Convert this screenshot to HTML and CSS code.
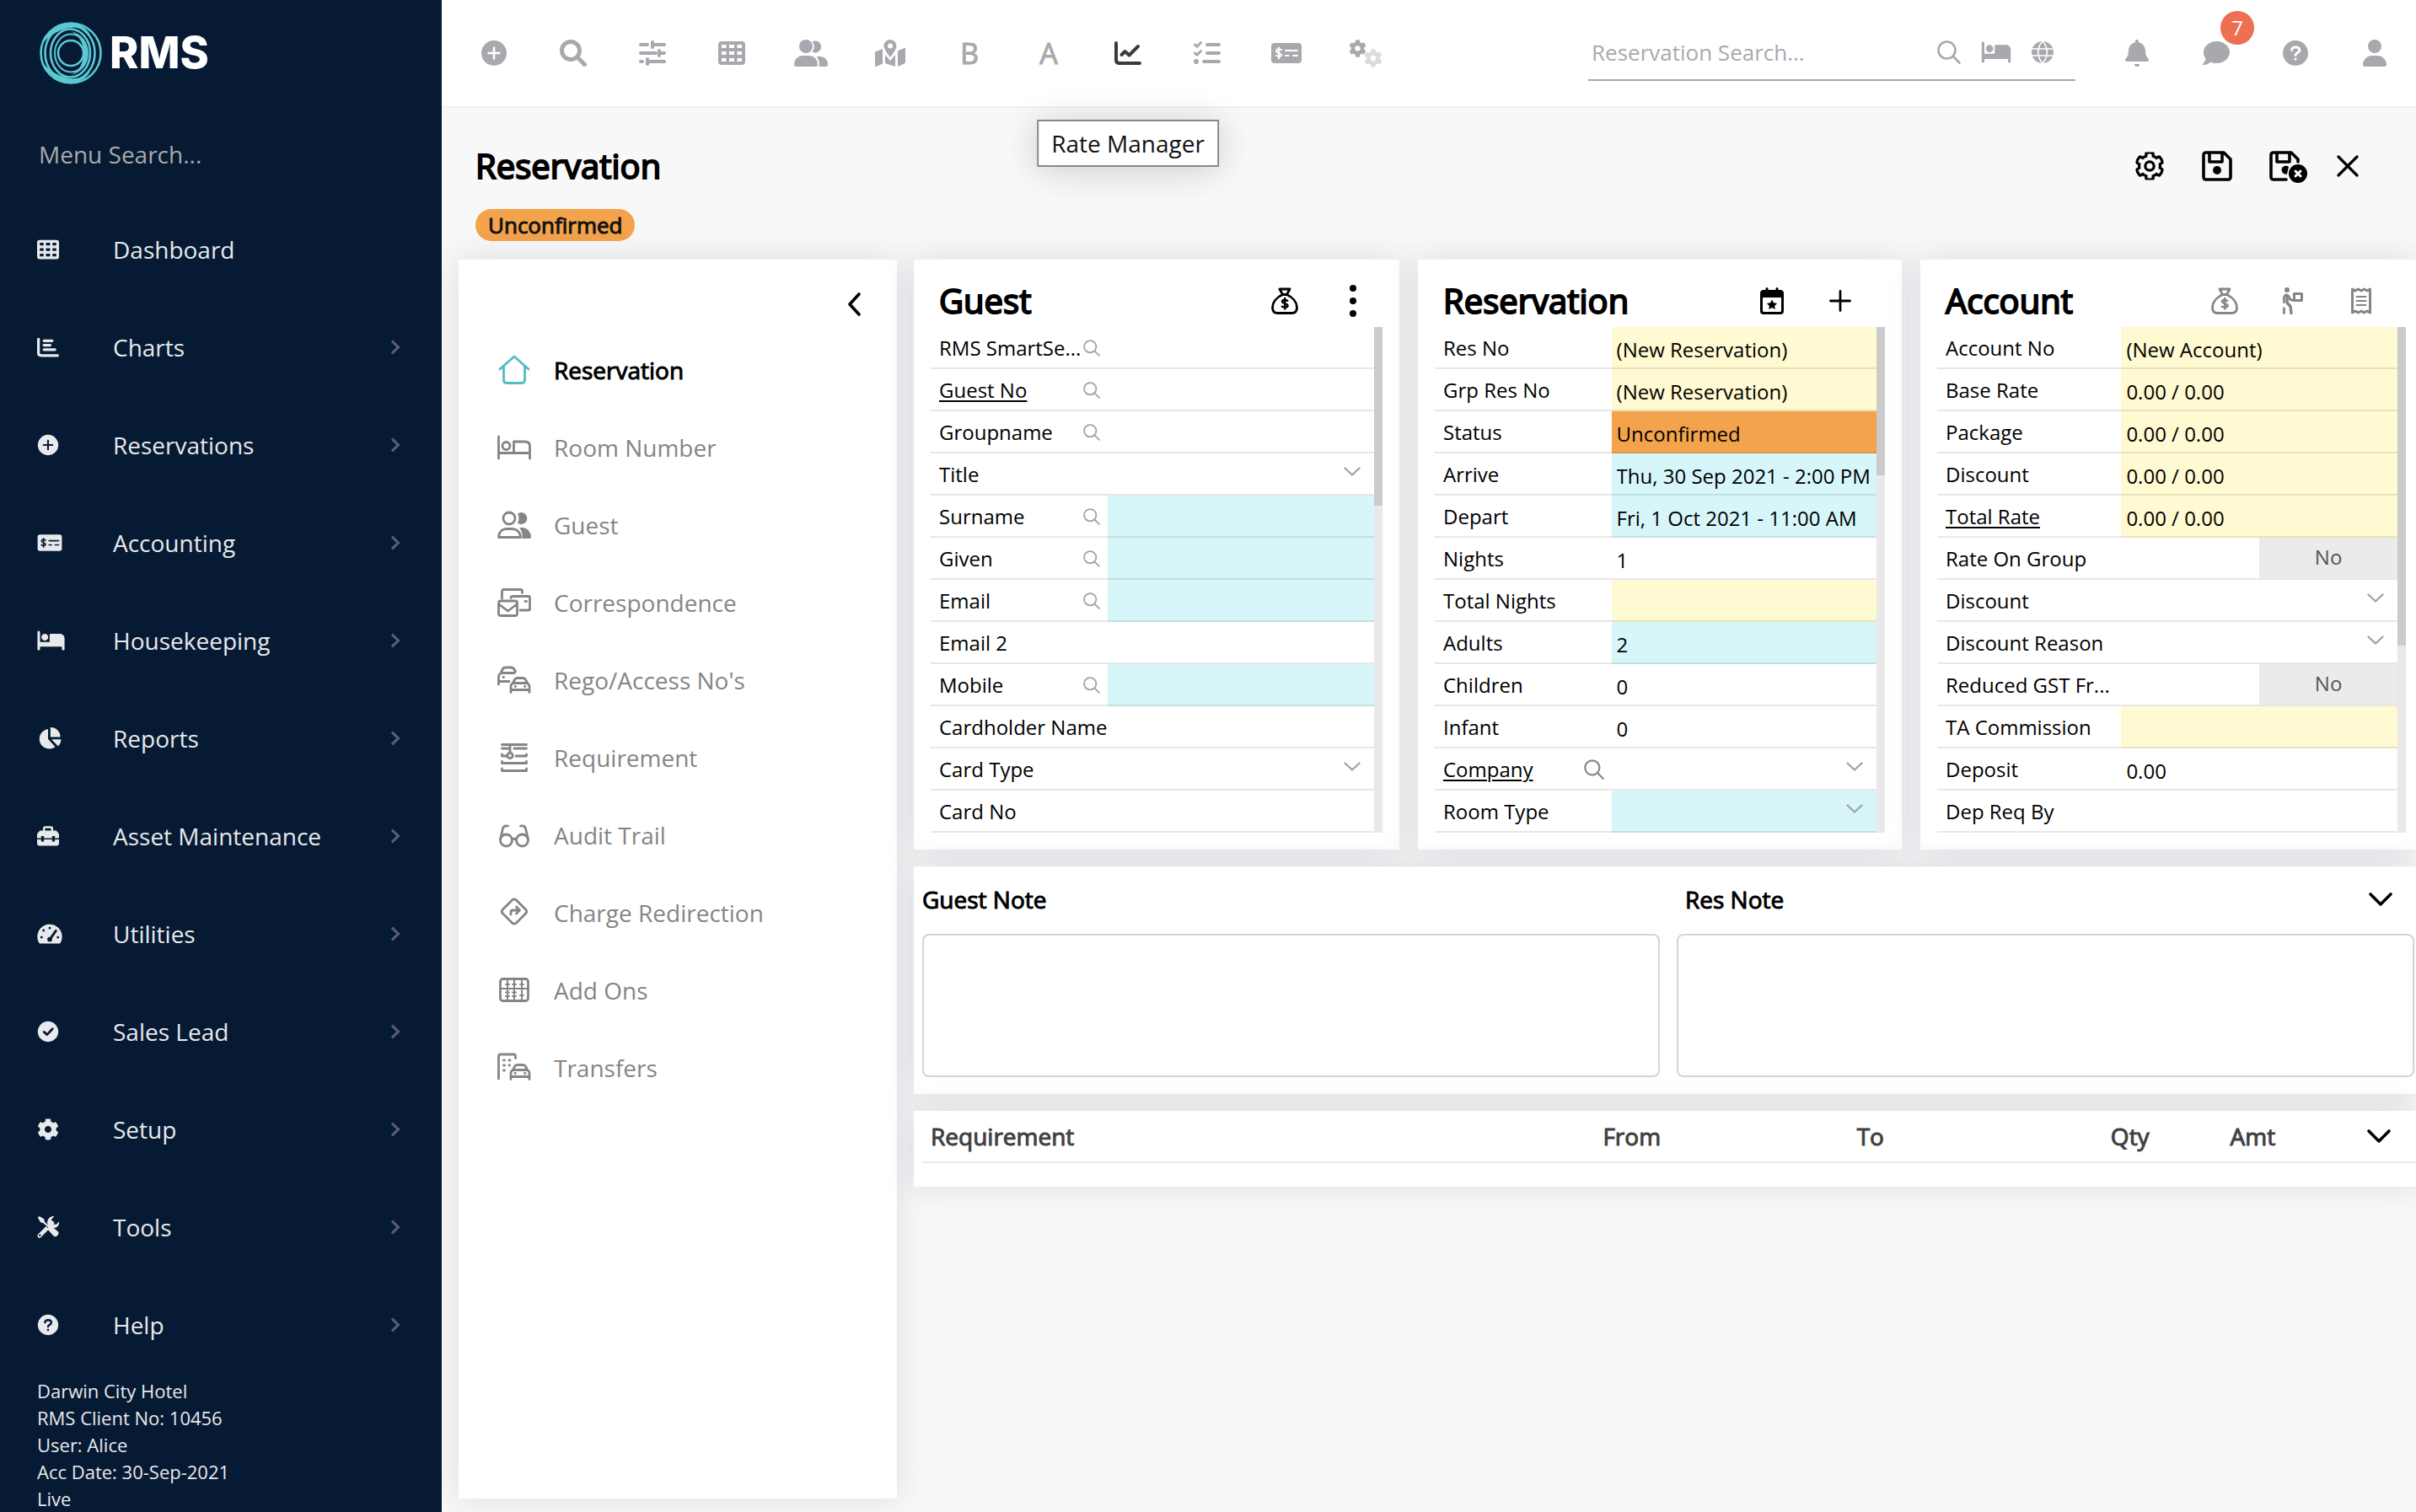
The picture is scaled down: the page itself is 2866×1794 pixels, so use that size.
FILE: index.html
```html
<!DOCTYPE html>
<html lang="en">
<head>
<meta charset="utf-8">
<title>RMS - Reservation</title>
<link rel="stylesheet" href="styles.css">
</head>
<body>
<svg class="sprite" aria-hidden="true">
  <symbol id="plus-circle" viewBox="0 0 32 32"><circle cx="16" cy="16" r="15"/><path class="cut" stroke-width="2.6" d="M16 9.5v13M9.5 16h13"/></symbol>
  <symbol id="magnifier" viewBox="0 0 32 32"><circle class="line" cx="13" cy="13" r="10.5" stroke-width="5"/><path class="line" stroke-width="5" d="M21 21l8.5 8.5"/></symbol>
  <symbol id="sliders" viewBox="0 0 32 32"><path class="line" stroke-width="4" d="M2 6h8M18 6h12M2 16h18M26 16h4M2 26h2M12 26h18M16 3v6M24 13v6M10 23v6"/></symbol>
  <symbol id="grid" viewBox="0 0 32 32"><path fill-rule="evenodd" d="M4 2h24a4 4 0 0 1 4 4v20a4 4 0 0 1-4 4H4a4 4 0 0 1-4-4V6a4 4 0 0 1 4-4zM4 6v4h5.500V6zM13 6v4h6V6zM22.500 6v4H28V6zM4 14v4h5.500v-4zM13 14v4h6v-4zM22.500 14v4H28v-4zM4 22v4h5.500v-4zM13 22v4h6v-4zM22.500 22v4H28v-4z"/></symbol>
  <symbol id="users" viewBox="0 0 40 32"><circle cx="14" cy="8" r="8"/><path d="M10 19h8a10 10 0 0 1 10 10c0 2-.7 3-2 3H2c-1.300 0-2-1-2-3a10 10 0 0 1 10-10z"/><path d="M21.500 14.500a7 7 0 1 0 0-12c3 4 3 8 0 12zM26.500 20H31a9 9 0 0 1 9 9c0 2-.7 3-2 3h-8.500c1-4-.2-9-3-12z"/></symbol>
  <symbol id="map" viewBox="0 0 36 32"><path d="M0 14.500L9 11v17.500L1.500 32C.6 32 0 31.500 0 31zM36 9.500L27 13.500V32l7.500-3.500c1-.5 1.500-1 1.500-2zM12 18l6 7 6-7v14l-12-4z"/><path fill-rule="evenodd" d="M18 0a7.500 7.500 0 0 1 7.500 7.500C25.500 12 18 21 18 21S10.500 12 10.500 7.500A7.500 7.500 0 0 1 18 0zm0 4.500a3 3 0 1 0 0 6 3 3 0 1 0 0-6z"/></symbol>
  <symbol id="chart-line" viewBox="0 0 32 32"><path class="line" stroke-width="4" d="M2 4v20q0 4 4 4h24M8.500 18l4-4 5 4.500L28 8"/></symbol>
  <symbol id="checklist" viewBox="0 0 32 32"><path class="line" stroke-width="4" d="M16 6h14M16 16h14M12 26h18"/><path class="line" stroke-width="3" d="M1.500 6l2.500 2.200L8.500 3.500M1.500 16l2.500 2.200 4.500-4.700"/><circle cx="3" cy="26" r="3"/></symbol>
  <symbol id="money-check" viewBox="0 0 36 32"><rect y="4" width="36" height="24" rx="4"/><path class="cut" stroke-width="2" d="M17 13h14M17 19h3.500M26 19h5M12 12.200c-3-1.500-6-.8-6 1.200 0 3 6 2 6 4.800 0 2-3.500 2.300-6 .8M9 9.500v13"/></symbol>
  <symbol id="gear" viewBox="0 0 512 512"><path d="M487.400 315.700l-42.600-24.600c4.300-23.200 4.300-47 0-70.200l42.600-24.600c4.900-2.800 7.100-8.600 5.500-14-11.100-35.600-30-67.800-54.700-94.600-3.800-4.100-10-5.100-14.800-2.300L380.800 110c-17.900-15.400-38.500-27.300-60.800-35.100V25.800c0-5.600-3.900-10.500-9.400-11.700-36.700-8.200-74.300-7.800-109.200 0-5.500 1.200-9.400 6.100-9.400 11.700V75c-22.200 7.900-42.800 19.800-60.800 35.100L88.700 85.500c-4.900-2.800-11-1.900-14.800 2.300-24.700 26.700-43.600 58.900-54.700 94.600-1.700 5.400.6 11.200 5.500 14L67.300 221c-4.300 23.200-4.300 47 0 70.200l-42.600 24.600c-4.900 2.800-7.100 8.600-5.500 14 11.100 35.600 30 67.800 54.700 94.600 3.800 4.100 10 5.100 14.800 2.300l42.600-24.600c17.900 15.400 38.500 27.300 60.800 35.100v49.200c0 5.600 3.900 10.500 9.400 11.700 36.700 8.200 74.300 7.800 109.200 0 5.500-1.200 9.400-6.100 9.400-11.700v-49.200c22.200-7.900 42.800-19.800 60.800-35.100l42.600 24.600c4.900 2.800 11 1.900 14.800-2.300 24.700-26.700 43.600-58.900 54.700-94.600 1.500-5.500-.7-11.300-5.600-14.100zM256 336c-44.100 0-80-35.900-80-80s35.900-80 80-80 80 35.900 80 80-35.900 80-80 80z"/></symbol>
  <symbol id="bed" viewBox="0 0 640 512"><path d="M176 256c44.110 0 80-35.890 80-80s-35.890-80-80-80-80 35.890-80 80 35.890 80 80 80zm352-160H304c-8.840 0-16 7.160-16 16v176H64V48c0-8.840-7.160-16-16-16H16C7.160 32 0 39.160 0 48v416c0 8.840 7.160 16 16 16h32c8.840 0 16-7.160 16-16v-64h512v64c0 8.840 7.160 16 16 16h32c8.840 0 16-7.160 16-16V208c0-61.860-50.140-112-112-112z"/></symbol>
  <symbol id="question" viewBox="0 0 32 32"><circle cx="16" cy="16" r="15"/><path class="cut" stroke-width="3" d="M11.500 12.500c.3-2.500 2-3.500 4.500-3.500 3 0 4.800 1.500 4.800 3.800 0 3-4.800 3-4.800 5.700M16 23v.3"/></symbol>
  <symbol id="search-thin" viewBox="0 0 28 28"><circle class="line" cx="11.500" cy="11.500" r="10" stroke-width="2.600"/><path class="line" stroke-width="2.600" d="M19 19l7.500 7.500"/></symbol>
  <symbol id="car" viewBox="0 0 26 20"><path class="line" stroke-width="2.800" d="M2 18.500V11q0-2 2-3l2.500-4.500Q7.500 1.500 10 1.500h6q2.500 0 3.500 2L22 8q2 1 2 3v7.500M2 15.500h22M5 7.500h16M7 11.500h.5M18.500 11.500h.5"/></symbol>
  <symbol id="moneybag" viewBox="0 0 32 32"><path class="line" stroke-width="2.800" d="M10 2h12l-3.500 6.500h-5zM13.500 8.500C6 12 1.500 18 1.500 24q0 6.500 6 6.500h17q6 0 6-6.500c0-6-4.500-12-12-15.500z"/><path class="line" stroke-width="2.400" d="M19.300 15.800c-2.800-1.300-6.300-1-6.300 1 0 2.800 6.600 2 6.600 4.900 0 2.200-4 2.400-6.800 1M16.200 13v12.500"/></symbol>
</svg>

<div class="app">
  <aside class="sidebar">
    <a class="brand" href="#">
      <svg class="brand-mark" viewBox="0 0 76 76"><g fill="none" stroke="#5bc8d3" stroke-width="2.600"><circle cx="38" cy="38" r="35.500"/><ellipse cx="37" cy="38" rx="29.500" ry="33"/><ellipse cx="37.500" cy="38" rx="23.500" ry="28.500"/><ellipse cx="38" cy="38" rx="19" ry="22.500" stroke-width="2"/><circle cx="38" cy="38" r="15"/></g><path fill="#5bc8d3" d="M5 26C11 8 28 0 42 3c8 1 15 6 19 13C51 7 39 6 29 10 18 14 11 19 5 26zM5 50c6 18 23 26 37 23 8-1 15-6 19-13-10 9-22 10-32 6-11-4-18-9-24-16zM38 12c13 3 21 13 21 26s-8 23-21 26c10-5 15-14 15-26S48 17 38 12z"/></svg>
      <span class="brand-name">RMS</span>
    </a>
    <input class="menu-search" type="search" placeholder="Menu Search..." aria-label="Menu search">
    <nav>
      <a class="nav-item" href="#"><svg class="ni" viewBox="0 0 32 32"><use href="#grid"/></svg><span>Dashboard</span></a>
      <a class="nav-item" href="#"><svg class="ni" viewBox="0 0 32 32"><path class="line" stroke-width="4" d="M2 4v20q0 4 4 4h24M10 6.500h12M10 13h9M10 19.500h16"/></svg><span>Charts</span><i class="arrow"></i></a>
      <a class="nav-item" href="#"><svg class="ni" viewBox="0 0 32 32"><use href="#plus-circle"/></svg><span>Reservations</span><i class="arrow"></i></a>
      <a class="nav-item" href="#"><svg class="ni ni-card" viewBox="0 0 36 32"><use href="#money-check"/></svg><span>Accounting</span><i class="arrow"></i></a>
      <a class="nav-item" href="#"><svg class="ni ni-wide" viewBox="0 0 640 512"><use href="#bed"/></svg><span>Housekeeping</span><i class="arrow"></i></a>
      <a class="nav-item" href="#"><svg class="ni" viewBox="0 0 32 32"><path d="M19.500 0A14 14 0 0 1 34 14H19.500zM21 17.500h14a14 14 0 0 1-4.500 10zM16 2.500V17l10.500 11.500A14.500 14.500 0 1 1 16 2.500z"/></svg><span>Reports</span><i class="arrow"></i></a>
      <a class="nav-item" href="#"><svg class="ni" viewBox="0 0 32 32"><path class="line" stroke-width="3" d="M10 9V5q0-2 2-2h8q2 0 2 2v4"/><path d="M4 8h24l4 5v6h-6v-3h-4v3H10v-3H6v3H0v-6zM0 21h6v3h4v-3h12v3h4v-3h6v6q0 3-3 3H3q-3 0-3-3z"/></svg><span>Asset Maintenance</span><i class="arrow"></i></a>
      <a class="nav-item" href="#"><svg class="ni ni-card" viewBox="0 0 36 32"><path d="M18 2a18 18 0 0 1 18 18c0 3-.7 6-2 8.500-.5 1-1.300 1.500-2.500 1.500h-27C3.300 30 2.500 29.500 2 28.500A18 18 0 0 1 18 2z"/><path class="cut" stroke-width="3.500" d="M18 7.500v.1M9 11v.1M6 21v.1M30 21v.1M18.500 23.500L27 11.500"/><circle class="dot" cx="18" cy="24" r="3.500"/></svg><span>Utilities</span><i class="arrow"></i></a>
      <a class="nav-item" href="#"><svg class="ni" viewBox="0 0 32 32"><circle cx="16" cy="16" r="15"/><path class="cut" stroke-width="3.400" d="M10 16.500l4.500 4 8-8.500"/></svg><span>Sales Lead</span><i class="arrow"></i></a>
      <a class="nav-item" href="#"><svg class="ni" viewBox="0 0 512 512"><use href="#gear"/></svg><span>Setup</span><i class="arrow"></i></a>
      <a class="nav-item" href="#"><svg class="ni" viewBox="0 0 32 32"><path class="line" stroke-width="6" d="M3.500 28.500L22 10"/><path d="M25 0l-4 5v5l2 2h5l4-4c1 6-4 10-9 9l-4-1-4-5c-1-6 4-12 10-11z"/><path class="cut" stroke-width="2" d="M3 3l22 22"/><path d="M1 2l2-2 7 4 1 4 6 6 4 0 10 9c2 3-3 9-7 6l-8-9v-4L9 10 5 9z"/><circle class="dot" cx="4" cy="28" r="1.500"/></svg><span>Tools</span><i class="arrow"></i></a>
      <a class="nav-item" href="#"><svg class="ni" viewBox="0 0 32 32"><use href="#question"/></svg><span>Help</span><i class="arrow"></i></a>
    </nav>
    <footer class="property">
      <div>Darwin City Hotel</div>
      <div>RMS Client No: 10456</div>
      <div>User: Alice</div>
      <div>Acc Date: 30-Sep-2021</div>
      <div>Live</div>
    </footer>
  </aside>

  <div class="workspace">
    <header class="topbar">
      <div class="tools">
        <button type="button" class="tool" aria-label="Add"><svg class="t32" viewBox="0 0 32 32"><use href="#plus-circle"/></svg></button>
        <button type="button" class="tool" aria-label="Search"><svg class="t32" viewBox="0 0 32 32"><use href="#magnifier"/></svg></button>
        <button type="button" class="tool" aria-label="Filters"><svg class="t32" viewBox="0 0 32 32"><use href="#sliders"/></svg></button>
        <button type="button" class="tool" aria-label="Grid"><svg class="t32" viewBox="0 0 32 32"><use href="#grid"/></svg></button>
        <button type="button" class="tool" aria-label="Guests"><svg class="t40" viewBox="0 0 40 32"><use href="#users"/></svg></button>
        <button type="button" class="tool" aria-label="Map"><svg class="t36" viewBox="0 0 36 32"><use href="#map"/></svg></button>
        <button type="button" class="tool">B</button>
        <button type="button" class="tool">A</button>
        <button type="button" class="tool tool-active" aria-label="Rate Manager" aria-describedby="tip"><svg class="t32" viewBox="0 0 32 32"><use href="#chart-line"/></svg><span class="tooltip" id="tip" role="tooltip">Rate Manager</span></button>
        <button type="button" class="tool" aria-label="Tasks"><svg class="t32" viewBox="0 0 32 32"><use href="#checklist"/></svg></button>
        <button type="button" class="tool" aria-label="Accounts"><svg class="t36" viewBox="0 0 36 32"><use href="#money-check"/></svg></button>
        <button type="button" class="tool" aria-label="Settings"><svg class="t40" viewBox="0 0 40 32"><use href="#gear" x="0" y="0" width="21" height="21"/><g opacity=".4"><use href="#gear" x="18" y="11" width="22" height="22"/></g></svg></button>
      </div>
      <div class="res-search">
        <input type="search" placeholder="Reservation Search..." aria-label="Reservation search">
        <button type="button" aria-label="Search"><svg class="s28" viewBox="0 0 28 28"><use href="#search-thin"/></svg></button>
        <button type="button" aria-label="Rooms"><svg class="s36" viewBox="0 0 640 512"><use href="#bed"/></svg></button>
        <button type="button" aria-label="Online"><svg class="s26" viewBox="0 0 26 26"><circle cx="13" cy="13" r="13"/><path class="cut" stroke-width="1.600" d="M0 9h26M0 17h26M13 0C6 7 6 19 13 26M13 0c7 7 7 19 0 26"/></svg></button>
      </div>
      <div class="user-tools">
        <button type="button" class="tool" aria-label="Alerts"><svg class="t28" viewBox="0 0 448 512"><path d="M224 512c35.320 0 50-20 50-50H174c0 30 15 50 50 50zm215.390-149.710c-19.320-20.760-55.470-51.990-55.470-154.290 0-77.700-54.480-139.900-127.940-155.160V32c0-17.670-14.320-32-31.980-32s-31.980 14.330-31.980 32v20.840C118.560 68.100 64.080 130.300 64.080 208c0 102.300-36.150 133.530-55.470 154.290-6 6.450-8.660 14.160-8.610 21.710.11 16.400 12.980 32 32.100 32h383.800c19.120 0 32-15.600 32.100-32 .05-7.550-2.610-15.270-8.610-21.710z"/></svg></button>
        <button type="button" class="tool" aria-label="Messages"><svg class="t32" viewBox="0 0 32 32"><path d="M16.500 2C25 2 32 8 32 15s-7 13-15.500 13c-2.500 0-5-.5-7-1.500C7 29 4 30 .8 30c-.8 0-1-.8-.5-1.300C1.800 27 3.300 25 3.600 22.800 1.800 20.600 1 18 1 15 1 8 8 2 16.500 2z"/></svg><span class="count">7</span></button>
        <button type="button" class="tool" aria-label="Help"><svg class="t32" viewBox="0 0 32 32"><use href="#question"/></svg></button>
        <button type="button" class="tool" aria-label="Profile"><svg class="t28" viewBox="0 0 28 32"><circle cx="14" cy="8" r="8"/><path d="M11 19h6a11 11 0 0 1 11 11q0 2-2 2H2q-2 0-2-2a11 11 0 0 1 11-11z"/></svg></button>
      </div>
    </header>

    <main class="page">
      <div class="page-head">
        <h1>Reservation</h1>
        <div class="actions">
          <button type="button" aria-label="Settings"><svg class="a36" viewBox="-22 -22 556 556"><g fill="none" stroke="currentColor" stroke-width="50"><use href="#gear" width="512" height="512"/></g></svg></button>
          <button type="button" aria-label="Save"><svg class="a36" viewBox="0 0 36 36"><path class="line" stroke-width="3.600" d="M5 2h21l8 8v21q0 3-3 3H5q-3 0-3-3V5q0-3 3-3zM9 3v10h15V3"/><circle cx="18" cy="23" r="5"/></svg></button>
          <button type="button" aria-label="Save and close"><svg class="a36" viewBox="0 0 36 36"><path class="line" stroke-width="3.600" d="M20 34H5q-3 0-3-3V5q0-3 3-3h21l8 8v3M9 3v10h15V3"/><path d="M23 19a5 5 0 1 0-2 8.500z"/><circle cx="34" cy="27" r="11"/><path class="cut" stroke-width="3" d="M31 24l6 6M37 24l-6 6"/></svg></button>
          <button type="button" aria-label="Close"><svg class="a26" viewBox="0 0 26 26"><path class="line" stroke-width="3.200" d="M2 2l22 22M24 2L2 24"/></svg></button>
        </div>
      </div>
      <span class="status">Unconfirmed</span>

      <div class="content">
        <section class="panel side-panel">
          <button type="button" class="collapse" aria-label="Collapse"><svg viewBox="0 0 16 28" width="16" height="28"><path class="line" stroke-width="3.600" d="M14 2L3 14l11 12"/></svg></button>
          <nav>
            <a class="tab tab-current" href="#"><svg viewBox="0 0 40 36"><path class="line" stroke-width="2.800" d="M3 17L20 2l17 15M7.500 14v16q0 3.500 3.500 3.500h18q3.500 0 3.500-3.500V14"/></svg>Reservation</a>
            <a class="tab" href="#"><svg viewBox="0 0 40 36"><path class="line" stroke-width="2.800" d="M1.500 5v26M1.500 24.500h37M38.500 31V16q0-5-6-5H19.500v13"/><circle class="line" cx="10.500" cy="16" r="4.500" stroke-width="2.800"/></svg>Room Number</a>
            <a class="tab" href="#"><svg viewBox="0 0 40 36"><circle class="line" cx="14" cy="10" r="7" stroke-width="2.800"/><path class="line" stroke-width="2.800" d="M10 22.500h8q9 1 9.500 10H1.500q.5-9 8.500-10z"/><path d="M24 15.500a7 7 0 1 0 0-11q3 5 0 11zM26 21h4q9 1 10 11 0 2-2 2h-9q2-7-3-13z"/></svg>Guest</a>
            <a class="tab" href="#"><svg viewBox="0 0 40 36"><path class="line" stroke-width="2.800" d="M5.500 13V5.500q0-3 2-3h20q2 0 2 2v2M16 12.500q0-2 3-2h18q1.500 0 1.500 2v13q0 1.500-1.500 1.500H27M1.500 19q0-3 2-3h18q2 0 2 3v11.500q0 3-2 3h-18q-2 0-2-3zM2 20l10.500 8L23 20M33 16.500h1.500"/></svg>Correspondence</a>
            <a class="tab" href="#"><svg viewBox="0 0 40 36"><use href="#car" x="14" y="14" width="26" height="20"/><path class="line" stroke-width="2.800" d="M1.500 23V13.500q0-2 2-3L6 5.500Q7 3 9.500 3h7q3 0 5 5M5 9.500h15M1.500 19.500H14M7 14.500h.5"/></svg>Rego/Access No's</a>
            <a class="tab" href="#"><svg viewBox="0 0 40 36"><path class="line" stroke-width="2.800" d="M5.500 2.500h29M5.500 7H14M20 7h14.500M5.500 14v2H11M22 16h12.500v-2M5.500 22.500v2h29v-2M5.500 31v2.500h29V31M15 3v8"/><circle class="line" cx="15" cy="15.500" r="3.200" stroke-width="2.800"/></svg>Requirement</a>
            <a class="tab" href="#"><svg viewBox="0 0 40 36"><circle class="line" cx="10.500" cy="24" r="7" stroke-width="2.800"/><circle class="line" cx="29.500" cy="24" r="7" stroke-width="2.800"/><path class="line" stroke-width="2.800" d="M17.500 23q2.500-1.500 5 0M3.500 23L6.500 10q1-4 6-3M36.500 23l-3-13q-1-4-6-3"/></svg>Audit Trail</a>
            <a class="tab" href="#"><svg viewBox="0 0 40 36"><path class="line" stroke-width="2.800" d="M18 2.500q2-1 4 0L34 14.500q1.500 2 0 4L22 30.500q-2 1-4 0L6 18.500q-1.500-2 0-4zM16 20v-3q0-2 3-2h7M22.500 11l4 4-4 4"/></svg>Charge Redirection</a>
            <a class="tab" href="#"><svg viewBox="0 0 40 36"><rect class="line" x="3.500" y="4.500" width="33" height="26" rx="3" stroke-width="2.800"/><path class="line" stroke-width="2" d="M4 16h32M12 5v25M20 5v25M29 5v25M10 11h4M18 11h4M27 11h4M10 20.500h4M18 20.500h4M10 25h4M18 25h4M27 24h4"/></svg>Add Ons</a>
            <a class="tab" href="#"><svg viewBox="0 0 40 36"><use href="#car" x="14" y="13" width="26" height="20"/><path class="line" stroke-width="2.800" d="M1.500 31V4.500q0-2.500 2-2.500h16q2 0 2 2.500v2M7.500 9h1M14 9h1M7.500 15h1M14 15h.5M7.500 21h1"/></svg>Transfers</a>
          </nav>
        </section>

        <div class="detail">
          <div class="cards">
            <section class="panel card">
              <header class="card-head head-guest"><h2>Guest</h2>
                <button type="button" aria-label="Payment"><svg class="t32" viewBox="0 0 32 32"><use href="#moneybag"/></svg></button>
                <button type="button" aria-label="More"><svg class="t40" viewBox="0 0 32 32"><circle cx="16" cy="1" r="4"/><circle cx="16" cy="16" r="4"/><circle cx="16" cy="31" r="4"/></svg></button>
              </header>
              <div class="scroll">
                <div class="fields">
                  <div class="row"><div class="name"><label for="g1">RMS SmartSe...</label><button type="button" aria-label="Find"><svg viewBox="0 0 28 28"><use href="#search-thin"/></svg></button></div><input id="g1"></div>
                  <div class="row"><div class="name"><a href="#">Guest No</a><button type="button" aria-label="Find"><svg viewBox="0 0 28 28"><use href="#search-thin"/></svg></button></div><input aria-label="Guest No"></div>
                  <div class="row"><div class="name"><label for="g3">Groupname</label><button type="button" aria-label="Find"><svg viewBox="0 0 28 28"><use href="#search-thin"/></svg></button></div><input id="g3"></div>
                  <div class="row"><div class="name"><label for="g4">Title</label></div><select id="g4"><option></option></select></div>
                  <div class="row"><div class="name"><label for="g5">Surname</label><button type="button" aria-label="Find"><svg viewBox="0 0 28 28"><use href="#search-thin"/></svg></button></div><input id="g5" class="required"></div>
                  <div class="row"><div class="name"><label for="g6">Given</label><button type="button" aria-label="Find"><svg viewBox="0 0 28 28"><use href="#search-thin"/></svg></button></div><input id="g6" class="required"></div>
                  <div class="row"><div class="name"><label for="g7">Email</label><button type="button" aria-label="Find"><svg viewBox="0 0 28 28"><use href="#search-thin"/></svg></button></div><input id="g7" class="required"></div>
                  <div class="row"><div class="name"><label for="g8">Email 2</label></div><input id="g8"></div>
                  <div class="row"><div class="name"><label for="g9">Mobile</label><button type="button" aria-label="Find"><svg viewBox="0 0 28 28"><use href="#search-thin"/></svg></button></div><input id="g9" class="required"></div>
                  <div class="row"><div class="name"><label for="g10">Cardholder Name</label></div><input id="g10"></div>
                  <div class="row"><div class="name"><label for="g11">Card Type</label></div><select id="g11"><option></option></select></div>
                  <div class="row"><div class="name"><label for="g12">Card No</label></div><input id="g12"></div>
                </div>
                <div class="track"><div class="thumb" style="height:212px"></div></div>
              </div>
            </section>

            <section class="panel card">
              <header class="card-head head-res"><h2>Reservation</h2>
                <button type="button" aria-label="Event calendar"><svg class="t32" viewBox="0 0 32 32"><path fill-rule="evenodd" d="M6 3h20q4 0 4 4v21q0 4-4 4H6q-4 0-4-4V7q0-4 4-4zM5 12v15.500Q5 29 6.500 29h19q1.500 0 1.500-1.500V12z"/><path class="line" stroke-width="3" d="M10 1.500v3M22 1.500v3"/><path d="M16 14.500l1.900 3.800 4.200.6-3 3 .7 4.100-3.800-2-3.800 2 .7-4.100-3-3 4.200-.6z"/></svg></button>
                <button type="button" aria-label="Add"><svg class="a26" viewBox="0 0 26 26"><path class="line" stroke-width="2.800" d="M13 1.500v23M1.500 13h23"/></svg></button>
              </header>
              <div class="scroll">
                <div class="fields">
                  <div class="row"><div class="name"><label for="r1">Res No</label></div><input id="r1" class="locked" readonly value="(New Reservation)"></div>
                  <div class="row"><div class="name"><label for="r2">Grp Res No</label></div><input id="r2" class="locked" readonly value="(New Reservation)"></div>
                  <div class="row"><div class="name"><label for="r3">Status</label></div><input id="r3" class="unconfirmed" readonly value="Unconfirmed"></div>
                  <div class="row"><div class="name"><label for="r4">Arrive</label></div><input id="r4" class="required" value="Thu, 30 Sep 2021 - 2:00 PM"></div>
                  <div class="row"><div class="name"><label for="r5">Depart</label></div><input id="r5" class="required" value="Fri, 1 Oct 2021 - 11:00 AM"></div>
                  <div class="row"><div class="name"><label for="r6">Nights</label></div><input id="r6" value="1"></div>
                  <div class="row"><div class="name"><label for="r7">Total Nights</label></div><input id="r7" class="locked" readonly></div>
                  <div class="row"><div class="name"><label for="r8">Adults</label></div><input id="r8" class="required" value="2"></div>
                  <div class="row"><div class="name"><label for="r9">Children</label></div><input id="r9" value="0"></div>
                  <div class="row"><div class="name"><label for="r10">Infant</label></div><input id="r10" value="0"></div>
                  <div class="row"><div class="name"><a href="#">Company</a><button type="button" class="find-large" aria-label="Find"><svg viewBox="0 0 28 28"><use href="#search-thin"/></svg></button></div><select aria-label="Company"><option></option></select></div>
                  <div class="row"><div class="name"><label for="r12">Room Type</label></div><select id="r12" class="required"><option></option></select></div>
                </div>
                <div class="track"><div class="thumb" style="height:176px"></div></div>
              </div>
            </section>

            <section class="panel card card-last">
              <header class="card-head head-res muted"><h2>Account</h2>
                <button type="button" aria-label="Payment"><svg class="t32" viewBox="0 0 32 32"><use href="#moneybag"/></svg></button>
                <button type="button" aria-label="Transfer"><svg class="t32" viewBox="0 0 32 32"><circle cx="9" cy="3" r="3"/><path class="line" stroke-width="3" d="M17.500 7.500h9v8h-9z"/><path class="line" stroke-width="2.800" d="M5.500 17.500q-1-8 2.500-8.500 3 0 4.500 5 .5 1 2.500 1h2M5.500 25v5.500"/><path class="line" stroke-width="3.400" d="M9 10v8l4 4.500 1 8"/></svg></button>
                <button type="button" aria-label="Receipt"><svg class="t32" viewBox="0 0 32 32"><path class="line" stroke-width="3" d="M5.500 2l3.500 2 3.500-2L16 4l3.500-2L23 4l3.500-2v28L23 28l-3.500 2-3.500-2-3.500 2L9 28l-3.500 2z"/><path class="line" stroke-width="2" d="M10.500 11h11M10.500 16h11M10.500 21h11"/></svg></button>
              </header>
              <div class="scroll">
                <div class="fields">
                  <div class="row"><div class="name"><label for="a1">Account No</label></div><input id="a1" class="locked" readonly value="(New Account)"></div>
                  <div class="row"><div class="name"><label for="a2">Base Rate</label></div><input id="a2" class="locked" readonly value="0.00 / 0.00"></div>
                  <div class="row"><div class="name"><label for="a3">Package</label></div><input id="a3" class="locked" readonly value="0.00 / 0.00"></div>
                  <div class="row"><div class="name"><label for="a4">Discount</label></div><input id="a4" class="locked" readonly value="0.00 / 0.00"></div>
                  <div class="row"><div class="name"><a href="#">Total Rate</a></div><input class="locked" readonly value="0.00 / 0.00" aria-label="Total Rate"></div>
                  <div class="row"><div class="name"><label for="a6">Rate On Group</label></div><div class="switch"><button type="button" id="a6" aria-pressed="false">No</button></div></div>
                  <div class="row"><div class="name"><label for="a7">Discount</label></div><select id="a7"><option></option></select></div>
                  <div class="row"><div class="name"><label for="a8">Discount Reason</label></div><select id="a8"><option></option></select></div>
                  <div class="row"><div class="name"><label for="a9">Reduced GST Fr...</label></div><div class="switch"><button type="button" id="a9" aria-pressed="false">No</button></div></div>
                  <div class="row"><div class="name"><label for="a10">TA Commission</label></div><input id="a10" class="locked" readonly></div>
                  <div class="row"><div class="name"><label for="a11">Deposit</label></div><input id="a11" value="0.00"></div>
                  <div class="row"><div class="name"><label for="a12">Dep Req By</label></div><input id="a12"></div>
                </div>
                <div class="track"><div class="thumb" style="height:378px"></div></div>
              </div>
            </section>
          </div>

          <section class="panel notes">
            <label for="guest-note">Guest Note</label>
            <div class="note-head"><label for="res-note">Res Note</label><button type="button" class="fold" aria-label="Collapse notes"><svg viewBox="0 0 28 16" width="28" height="16"><path class="line" stroke-width="3.600" d="M2 2l12 12L26 2"/></svg></button></div>
            <textarea id="guest-note"></textarea>
            <textarea id="res-note"></textarea>
          </section>

          <section class="panel requirements">
            <table>
              <thead><tr><th class="c-req">Requirement</th><th class="c-date">From</th><th class="c-date">To</th><th class="c-num">Qty</th><th>Amt</th><th class="c-fold"><button type="button" class="fold" aria-label="Collapse requirements"><svg viewBox="0 0 28 16" width="28" height="16"><path class="line" stroke-width="3.600" d="M2 2l12 12L26 2"/></svg></button></th></tr></thead>
            </table>
          </section>
        </div>
      </div>
    </main>
  </div>
</div>
</body>
</html>
```

FILE: styles.css
```css
* { box-sizing: border-box; }

body {
  margin: 0;
  font-family: "Open Sans", "Noto Sans", sans-serif;
  font-size: 28px;
  color: #000;
  background: #f8f8f8;
  overflow: hidden;
}

button, input, select, textarea { font: inherit; color: inherit; border: 0; border-radius: 0; margin: 0; padding: 0; background: none; outline: 0; }
button { display: flex; align-items: center; justify-content: center; }
a { color: inherit; text-decoration: none; }
h1, h2 { margin: 0; font-size: 40px; font-weight: 400; -webkit-text-stroke: 2px currentColor; }
input[type="search"] { appearance: none; }

svg { display: block; fill: currentColor; overflow: visible; flex: none; }
.sprite { position: absolute; width: 0; height: 0; }
.line { fill: none; stroke: currentColor; stroke-linecap: round; stroke-linejoin: round; }
.cut { fill: none; stroke: var(--under); stroke-linecap: round; stroke-linejoin: round; }
.dot { fill: var(--under); }

.app { display: flex; height: 100vh; --under: #fff; }

/* Sidebar */
.sidebar {
  --under: #061a34;
  flex: 0 0 524px;
  background: #061a34;
  color: #e8e9eb;
  position: relative;
  z-index: 1;
  overflow: hidden;
}
.brand { display: flex; align-items: center; gap: 8px; height: 126px; padding-left: 46px; }
.brand-mark { width: 76px; height: 76px; }
.brand-name { font: 800 52px/64px Inter, sans-serif; color: #fff; }
.menu-search { display: block; width: 100%; height: 112px; padding: 2px 0 0 46px; }
.menu-search::placeholder { color: #a9a9a9; opacity: 1; }
.nav-item { display: grid; grid-template-columns: 90px 1fr auto; align-items: center; height: 116px; padding: 0 52px 0 44px; }
.ni { width: 26px; height: 26px; }
.ni-card { width: 30px; }
.ni-wide { width: 33px; }
.arrow { width: 12px; height: 12px; border: solid #5d5b82; border-width: 3px 3px 0 0; transform: rotate(45deg); }
.property { padding: 4px 44px 0; font-size: 22px; line-height: 32px; }

/* Top bar */
.workspace { flex: 1; min-width: 0; display: flex; flex-direction: column; }
.topbar { display: flex; align-items: center; flex: 0 0 128px; padding: 0 2px 0 15px; background: #fff; border-bottom: 2px solid #f0eff4; color: #a8a9ae; }
.tools, .user-tools { display: flex; }
.tool { position: relative; width: 94px; height: 66px; font-size: 34px; -webkit-text-stroke: 1px currentColor; }
.tool-active { color: #3b3b3b; }
.t28 { width: 28px; height: 32px; }
.t32 { width: 32px; height: 32px; }
.t36 { width: 36px; height: 32px; }
.t40 { width: 40px; height: 32px; }
.tooltip {
  position: absolute;
  top: 112px;
  left: 50%;
  transform: translateX(-50%);
  z-index: 2;
  padding: 0 15px;
  border: 2px solid #7f8b93;
  background: #fff;
  color: #111;
  font-size: 28px;
  line-height: 52px;
  white-space: nowrap;
  -webkit-text-stroke: 0;
  box-shadow: 0 4px 40px rgba(0, 0, 0, .18);
}
.count { position: absolute; top: -17px; right: 2px; width: 40px; height: 40px; border-radius: 50%; background: #ee6f52; color: #fff; font-size: 24px; line-height: 40px; -webkit-text-stroke: 0; }
.res-search { display: flex; align-items: center; gap: 24px; width: 578px; height: 66px; margin: 0 26px 0 auto; padding: 0 26px 0 4px; border-bottom: 2px solid #a8a9ae; font-size: 26px; }
.res-search input { flex: 1; min-width: 0; height: 60px; }
.res-search input::placeholder { color: #a8a9ae; opacity: 1; }
.s28 { width: 28px; height: 28px; }
.s36 { width: 36px; height: 28px; }
.s26 { width: 26px; height: 26px; }

/* Page */
.page { flex: 1; min-height: 0; display: flex; flex-direction: column; align-items: flex-start; padding: 41px 0 16px 20px; }
.page-head { display: flex; align-items: center; justify-content: space-between; align-self: stretch; padding: 0 68px 0 20px; }
.page-head h1 { line-height: 56px; }
.actions { display: flex; align-items: center; gap: 44px; }
.a36 { width: 36px; height: 36px; }
.a26 { width: 26px; height: 26px; }
.status { margin: 23px 20px 22px; padding: 0 15px; border-radius: 19px; background: #f3a34c; color: #111; font-size: 26px; line-height: 38px; -webkit-text-stroke: 1px currentColor; }
.content { flex: 1; min-height: 0; align-self: stretch; display: flex; gap: 20px; }
.panel { background: #fff; box-shadow: 0 0 36px rgba(60, 50, 95, .14); }

.side-panel { flex: 0 0 520px; padding-top: 20px; }
.collapse { width: 100%; height: 65px; padding-right: 43px; justify-content: flex-end; }
.tab { display: flex; align-items: center; gap: 27px; height: 92px; padding-left: 46px; color: #858585; }
.tab svg { width: 40px; height: 36px; }
.tab-current { color: #000; -webkit-text-stroke: 1px currentColor; }
.tab-current svg { color: #54bcc3; }

.detail { flex: 1; min-width: 0; display: flex; flex-direction: column; gap: 20px; }
.cards { display: grid; grid-template-columns: 576fr 574fr 588fr; gap: 22px; }
.card { padding: 0 20px 20px; min-width: 0; }
.card-last { padding-right: 12px; }
.card-head { display: flex; align-items: center; gap: 41px; height: 80px; padding: 18px 15px 0 10px; }
.card-head h2 { flex: 1; line-height: 56px; }
.card-head button { width: 40px; }
.head-res { padding-right: 33px; }
.muted button { color: #858585; }
.scroll { display: flex; font-size: 24px; }
.fields { flex: 1; min-width: 0; }
.track { width: 10px; background: #e9e9e9; }
.thumb { background: #cbcbcb; }

.row { display: grid; grid-template-columns: 2fr 3fr; height: 50px; }
.row > * { border-bottom: 2px solid rgba(60, 60, 60, .12); min-width: 0; width: 100%; height: 50px; }
.name { display: flex; align-items: center; justify-content: space-between; padding: 2px 9px 0 10px; white-space: nowrap; line-height: 46px; }
.name a { text-decoration: underline; text-underline-offset: 3px; text-decoration-thickness: 2px; }
.name button { color: #a3a3a3; }
.name svg { width: 20px; height: 20px; }
.name .find-large { color: #858585; }
.name .find-large svg { width: 24px; height: 24px; }
.row input { padding: 4px 0 0 6px; }
.row select {
  appearance: none;
  background: url("data:image/svg+xml,%3Csvg xmlns='http://www.w3.org/2000/svg' viewBox='0 0 20 12'%3E%3Cpath d='M1.500 1.500L10 9.500l8.500-8' fill='none' stroke='%23a3a3a3' stroke-width='2.400' stroke-linecap='round' stroke-linejoin='round'/%3E%3C/svg%3E") no-repeat right 16px top 16px / 20px 12px;
}
.row .required { background-color: #d7f6fa; }
.row .locked { background-color: #fffad1; }
.row .unconfirmed { background-color: #f3a34c; }
.switch { display: flex; justify-content: flex-end; }
.switch button { width: 50%; background: #ebebeb; color: #555; padding-bottom: 4px; }

.notes { display: grid; grid-template-columns: 1fr 1fr; grid-template-rows: 80px 170px; column-gap: 20px; padding: 0 2px 20px 10px; line-height: 78px; }
.notes label { -webkit-text-stroke: 1px currentColor; }
.note-head { display: flex; align-items: center; justify-content: space-between; padding: 0 26px 2px 10px; }
.notes textarea { resize: none; border: 2px solid #d4d4d4; border-radius: 8px; padding: 10px; line-height: 36px; }

.requirements { padding: 0 0 28px 10px; }
.requirements table { width: 100%; border-collapse: collapse; table-layout: fixed; }
.requirements th { height: 61px; padding: 0 0 0 10px; border-bottom: 2px solid #e9e8ec; text-align: left; font-weight: 400; color: #404040; -webkit-text-stroke: 1px currentColor; }
.c-req { width: 45%; }
.c-date { width: 17%; }
.c-num { width: 8%; }
.requirements .c-fold { width: 68px; color: #000; }
```
